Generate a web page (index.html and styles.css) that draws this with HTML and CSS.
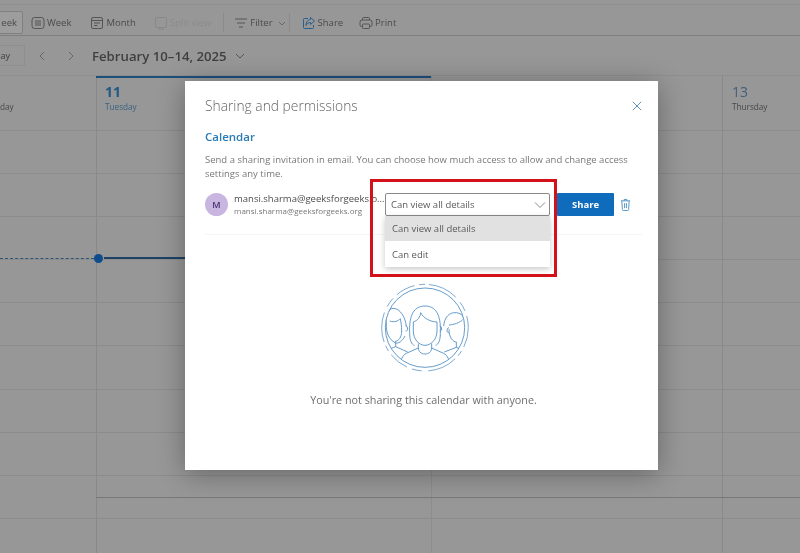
FILE: index.html
```html
<!DOCTYPE html>
<html lang="en">
<head>
<meta charset="utf-8">
<title>Sharing and permissions</title>
<link rel="stylesheet" href="styles.css">
</head>
<body>
<div class="app">
  <header class="toolbar">
    <div class="tool tool-active tool-cut"><span>eek</span></div>
    <div class="tool tool-week">
      <svg class="ic" viewBox="0 0 14 14"><rect x="1" y="1.500" width="12" height="11" rx="2.500"/><path d="M5 4v6M7 4v6M9 4v6"/></svg><span>Week</span>
    </div>
    <div class="tool">
      <svg class="ic" viewBox="0 0 14 14"><rect x="1.500" y="1.500" width="11" height="11" rx="1.500"/><path d="M1.500 4.500h11M4 7h6M4 9.500h3.500"/></svg><span>Month</span>
    </div>
    <div class="tool tool-off">
      <svg class="ic" viewBox="0 0 14 14"><rect x="1.500" y="1.500" width="11" height="10" rx="1.500"/><path d="M4 13h6"/></svg><span>Split view</span>
    </div>
    <i class="sep"></i>
    <div class="tool tool-filter">
      <svg class="ic" viewBox="0 0 14 14"><path d="M1 3h12M3 7h8M5 11h4"/></svg><span>Filter</span>
      <svg class="chev-s" viewBox="0 0 8 8"><path d="M1 3l3 3 3-3"/></svg>
    </div>
    <i class="sep"></i>
    <div class="tool tool-share">
      <svg class="ic ic-blue" viewBox="0 0 14 14"><path d="M6 2.500H2.500a1 1 0 0 0-1 1v8a1 1 0 0 0 1 1h8a1 1 0 0 0 1-1V9M8.500 1.500l4 3.500-4 3.500V6.500C6.500 6.500 5 7.500 4 9.500C4 6 6 3.500 8.500 3.500z"/></svg><span>Share</span>
    </div>
    <div class="tool tool-print">
      <svg class="ic" viewBox="0 0 14 14"><path d="M3.500 4V2.500a1 1 0 0 1 1-1h5a1 1 0 0 1 1 1V4M3.500 10.500H2.500a1.500 1.500 0 0 1-1.500-1.500V6a2 2 0 0 1 2-2h8a2 2 0 0 1 2 2v3a1.500 1.500 0 0 1-1.500 1.500h-1"/><rect x="3.500" y="8" width="7" height="4.500" rx=".8"/></svg><span>Print</span>
    </div>
  </header>

  <nav class="datebar">
    <div class="today"><span>ay</span></div>
    <svg class="nav-chev" viewBox="0 0 8 12"><path d="M6 2L2 6l4 4"/></svg>
    <svg class="nav-chev nav-next" viewBox="0 0 8 12"><path d="M2 2l4 4-4 4"/></svg>
    <h1 class="range">February 10–14, 2025</h1>
    <svg class="range-chev" viewBox="0 0 10 8"><path d="M1 2l4 4 4-4"/></svg>
  </nav>

  <main class="calendar">
    <div class="col col-mon">
      <div class="day-head"><b class="num">&nbsp;</b><span class="dow dow-cut">day</span></div>
      <div class="hours"></div>
    </div>
    <div class="col col-tue">
      <div class="day-head head-today"><b class="num">11</b><span class="dow">Tuesday</span></div>
      <div class="hours"></div>
    </div>
    <div class="col col-wed">
      <div class="day-head"><b class="num">&nbsp;</b><span class="dow">&nbsp;</span></div>
      <div class="hours"></div>
    </div>
    <div class="col col-thu">
      <div class="day-head"><b class="num">13</b><span class="dow">Thursday</span></div>
      <div class="hours"></div>
    </div>
  </main>

  <div class="now-line"><i class="now-dash"></i><i class="now-dot"></i><i class="now-solid"></i></div>
  <div class="all-day-line"></div>

  <section class="modal">
    <div class="modal-head">
      <h2>Sharing and permissions</h2>
      <svg class="close" viewBox="0 0 12 12"><path d="M1 1l10 10M11 1L1 11"/></svg>
    </div>
    <h3>Calendar</h3>
    <p class="intro">Send a sharing invitation in email. You can choose how much access to allow and change access settings any time.</p>
    <div class="share-row">
      <div class="avatar">M</div>
      <div class="who">
        <div class="who-name">mansi.sharma@geeksforgeeks.o...</div>
        <div class="who-mail">mansi.sharma@geeksforgeeks.org</div>
      </div>
      <div class="picker">
        <div class="select"><span>Can view all details</span>
          <svg class="select-chev" viewBox="0 0 12 8"><path d="M1 1.500l5 5 5-5"/></svg>
        </div>
        <ul class="menu">
          <li class="menu-on">Can view all details</li>
          <li>Can edit</li>
        </ul>
        <div class="highlight"></div>
      </div>
      <button class="share-btn">Share</button>
      <svg class="trash" viewBox="0 0 12 14"><path d="M1 3h10M4.500 3V1.500h3V3M2 3l.6 9.500a1 1 0 0 0 1 1h4.800a1 1 0 0 0 1-1L10 3M5 5.500v5.500M7 5.500v5.500"/></svg>
    </div>
    <div class="rule"></div>
    <div class="empty">
      <svg class="people" viewBox="0 0 330 300">
        <defs><clipPath id="disc"><circle cx="168" cy="155" r="119"/></clipPath></defs>
        <circle class="ring-dash" cx="168" cy="155" r="130"/>
        <circle cx="168" cy="155" r="119"/>
        <g clip-path="url(#disc)">
          <path d="M112 150C108 120 92 100 78 98C62 92 46 115 52 140C50 170 60 190 78 200C88 205 100 195 108 180"/>
          <path d="M62 135C76 140 88 135 94 128C96 140 98 150 98 165C98 185 88 195 80 195"/>
          <path d="M80 195V212L116 228M80 212C60 218 48 230 42 250"/>
          <path d="M224 150C226 125 240 108 262 110C285 112 292 135 290 165"/>
          <path d="M240 147C254 146 274 140 282 130M240 160C240 185 252 198 262 198M262 198V214M262 214L226 228M262 214C280 220 292 235 296 250"/>
          <path d="M240 155a6 9 0 0 0-6 9c0 4 2 6 6 6M110 150a6 9 0 0 1 6 9c0 4-2 6-6 6M212 150a6 9 0 0 1 6 9c0 4-2 6-6 6"/>
          <path d="M122 172C120 130 128 90 168 90C208 90 216 130 214 172C214 195 208 205 200 208M136 208C128 205 122 195 122 172"/>
          <path d="M133 138C146 134 154 122 155 110C164 128 184 137 204 138L204 165C204 190 186 208 168 208C150 208 133 190 133 165Z"/>
          <path d="M148 203V216C148 226 156 234 168 234C180 234 188 226 188 216V203"/>
          <path d="M148 216L112 232C100 238 94 252 92 280M188 216L224 232C236 238 242 252 244 280"/>
        </g>
      </svg>
      <p class="empty-text">You're not sharing this calendar with anyone.</p>
    </div>
  </section>
</div>
</body>
</html>
```
FILE: styles.css
```css
* { box-sizing: border-box; }
html, body { margin: 0; height: 100%; overflow: hidden; }
body { background: #979797; font-family: "Open Sans", "Noto Sans", sans-serif; color: #3d3d3d; }
.app { position: relative; width: 800px; height: 553px; overflow: hidden; background: #979797; filter: blur(.3px); }

.toolbar { display: flex; align-items: center; padding-top: 5px; border-top: 1px solid #8e8e8e; margin-top: 4px; height: 32px; border-bottom: 1px solid #7f7f7f; font-size: 9.500px; color: #4a4a4a; }
.tool { display: flex; align-items: center; gap: 2px; white-space: nowrap; margin-right: 18px; }
.tool-cut { width: 24px; height: 23px; margin-left: -1px; margin-right: 8px; justify-content: flex-end; padding-right: 5px; border: 1px solid #808080; border-radius: 2px; background: #9d9d9d; }
.tool-week { margin-right: 19px; }
.tool-off { color: #8b8b8b; margin-right: 12px; }
.tool-off .ic { stroke: #888; }
.tool-filter { margin-left: 10px; margin-right: 3px; }
.tool-share { margin-left: 12px; margin-right: 16px; }
.tool-print { margin-right: 0; }
.ic { width: 14px; height: 14px; fill: none; stroke: #555; stroke-width: 1; flex: none; }
.ic-blue { stroke: #28608f; }
.chev-s { width: 8px; height: 8px; margin-left: 3px; fill: none; stroke: #666; stroke-width: 1; }
.sep { width: 1px; height: 19px; background: #8a8a8a; }

.datebar { height: 40px; display: flex; align-items: center; border-bottom: 1px solid #8e8e8e; color: #3c3c3c; }
.today { width: 25px; height: 21px; display: flex; align-items: center; justify-content: flex-end; padding-right: 14px; border: 1px solid #8f8f8f; border-left: 0; font-size: 9px; }
.nav-chev { width: 8px; height: 12px; margin-left: 13px; fill: none; stroke: #666; stroke-width: 1; }
.nav-next { margin-left: 21px; }
.range { margin: 0 0 0 17px; font-size: 13.200px; font-weight: 600; white-space: nowrap; color: #3f3f3f; }
.range-chev { width: 10px; height: 8px; margin-left: 8px; fill: none; stroke: #555; stroke-width: 1; }

.calendar { display: grid; grid-template-columns: 96px 335px 291px 78px; height: 477px; }
.col { display: flex; flex-direction: column; border-left: 1px solid #898989; }
.col-mon { border-left: 0; }
.col-wed { border-left-color: #8d8d8d; }
.day-head { height: 54px; padding: 8px 0 0 9px; display: flex; flex-direction: column; }
.col-mon .day-head { padding-left: 0; }
.head-today { border-top: 2px solid #1d4f7d; padding-top: 6px; margin-left: -1px; padding-left: 9px; }
.num { font-size: 14px; line-height: 16px; font-weight: 400; color: #3f5f7b; }
.head-today .num { font-weight: 700; color: #1f5785; }
.dow { font-size: 8.200px; line-height: 13px; margin-top: 0; color: #484848; }
.head-today .dow { color: #3a6283; }
.hours { flex: 1; background-image: repeating-linear-gradient(to bottom, #8c8c8c 0, #8c8c8c 1px, transparent 1px, transparent 43.100px); }

.now-line { position: absolute; left: 0; top: 254px; width: 431px; height: 8px; display: flex; align-items: center; }
.now-dash { width: 94px; border-top: 1px dashed #2d5578; }
.now-dot { width: 9px; height: 9px; border-radius: 50%; background: #0f4c8c; flex: none; margin-right: 1px; }
.now-solid { flex: 1; height: 2px; background: #1d4266; }
.all-day-line { position: absolute; left: 96px; right: 0; top: 497px; height: 1px; background: #787878; }

.modal { position: absolute; left: 185px; top: 81px; width: 473px; height: 389px; padding: 15px 16px 0 20px; display: flex; flex-direction: column; background: #fff; box-shadow: 0 4px 26px rgba(0,0,0,.32); color: #666; }
.modal-head { display: flex; align-items: center; justify-content: space-between; height: 19px; }
.modal-head h2 { margin: 0; font-size: 13.800px; font-weight: 300; color: #666; white-space: nowrap; }
.close { width: 10px; height: 10px; fill: none; stroke: #3f7da8; stroke-width: 1; }
h3 { margin: 14px 0 0; font-size: 11.500px; line-height: 16px; font-weight: 600; color: #2a7ab5; }
.intro { margin: 8px 0 0; width: 432px; font-size: 9.500px; line-height: 14px; color: #787878; }
.share-row { display: flex; align-items: center; height: 23px; margin-top: 12px; }
.avatar { width: 23px; height: 23px; border-radius: 50%; background: #c8b5e0; color: #47306b; display: flex; align-items: center; justify-content: center; font-size: 9px; font-weight: 600; flex: none; }
.who { width: 151px; margin-left: 6px; overflow: hidden; white-space: nowrap; }
.who-name { font-size: 9.500px; line-height: 12px; color: #4c4c4c; }
.who-mail { font-size: 8px; line-height: 11px; color: #777; }
.picker { position: relative; width: 165px; height: 23px; flex: none; }
.select { height: 23px; display: flex; align-items: center; justify-content: space-between; padding: 0 3px 0 5px; border: 1px solid #8a8a8a; border-radius: 2px; font-size: 9.500px; color: #5a5a5a; background: #fff; }
.select-chev { width: 12px; height: 8px; fill: none; stroke: #8a8a8a; stroke-width: 1; }
.menu { position: absolute; left: 0; top: 23px; width: 100%; margin: 0; padding: 0; list-style: none; background: #fff; box-shadow: 0 2px 6px rgba(0,0,0,.22); font-size: 9.500px; color: #5a5a5a; }
.menu li { height: 26px; display: flex; align-items: center; padding-left: 7px; }
.menu .menu-on { height: 25px; background: #e1e1e1; }
.highlight { position: absolute; left: -15px; top: -14px; width: 187px; height: 98px; border: 3px solid #d2111b; pointer-events: none; }
.share-btn { width: 57px; height: 23px; margin-left: 7px; flex: none; border: 0; border-radius: 1px; background: #0f6cbd; color: #fff; font: 700 9.500px "Open Sans", sans-serif; padding: 0; }
.trash { width: 11px; height: 13px; margin-left: 6px; flex: none; fill: none; stroke: #4a8fbf; stroke-width: 1; }
.rule { height: 1px; margin-top: 18px; background: #f5f5f5; }
.empty { display: flex; flex-direction: column; align-items: center; margin-top: 41px; }
.people { display: block; width: 110px; height: 100px; fill: none; stroke: #5a95c6; stroke-width: 2.800; }
.ring-dash { stroke-dasharray: 60 14 18 12 90 20 30 16; stroke-width: 2.400; }
.empty-text { margin: 16px 0 0; font-size: 10.800px; line-height: 16px; color: #6e6e6e; white-space: nowrap; font-weight: 400; }
```
